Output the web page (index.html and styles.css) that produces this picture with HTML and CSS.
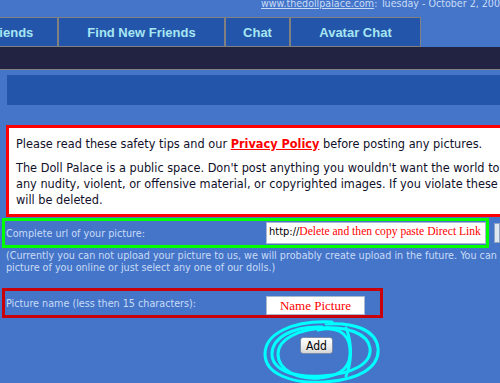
FILE: index.html
```html
<!DOCTYPE html>
<html lang="en">
<head>
  <meta charset="UTF-8" />
  <title>The Doll Palace - Add Picture</title>
  <link rel="stylesheet" href="styles.css">
</head>
<body>

<div class="topline">
  <a href="#">www.thedollpalace.com</a>: Tuesday - October 2, 2007
</div>

<div class="tabs">
  <a class="tab tab-first" href="#">My Friends</a>
  <a class="tab tab-find" href="#">Find New Friends</a>
  <a class="tab tab-chat" href="#">Chat</a>
  <a class="tab tab-avatar" href="#">Avatar Chat</a>
</div>
<div class="darkbar"></div>

<div class="titlebar"></div>

<div class="notice">
  <p>Please read these safety tips and our <a href="#">Privacy Policy</a> before posting any pictures.</p>
  <p>The Doll Palace is a public space. Don't post anything you wouldn't want the world to see. Please don't post<br>
  any nudity, violent, or offensive material, or copyrighted images. If you violate these rules, your pictures<br>
  will be deleted.</p>
</div>

<div class="form">
  <div class="url-line">
    <div class="row row-url">
      <label class="row-label">Complete url of your picture:</label>
      <div class="field field-url"><span class="proto">http://</span><span class="hint">Delete and then copy paste Direct Link</span></div>
    </div>
    <div class="side-btn"></div>
  </div>

  <p class="help">(Currently you can not upload your picture to us, we will probably create upload in the future. You can link to a<br>
  picture of you online or just select any one of our dolls.)</p>

  <div class="row row-name">
    <label class="row-label">Picture name (less then 15 characters):</label>
    <div class="field field-name">Name Picture</div>
  </div>

  <div class="submit">
    <button class="add-btn">Add</button>
    <!-- marker scribble round the button -->
    <svg class="scribble" width="124" height="70" viewBox="0 0 124 70">
      <g fill="none" stroke="#00ffff" stroke-width="3" stroke-linecap="round">
        <path d="M70 4 C30 2 3 16 3 36 C3 56 30 66 62 64 C96 62 118 50 116 30 C114 12 92 4 64 6"/>
        <path d="M60 9 C30 8 10 20 10 36 C10 52 32 60 60 58 C90 56 110 46 108 30 C106 16 86 8 58 10"/>
        <path d="M66 10 C36 10 16 22 16 36 C16 52 36 62 58 60 C80 58 90 48 88 30 C86 14 74 8 56 12"/>
        <path d="M84 10 C90 24 90 44 84 58"/>
      </g>
    </svg>
  </div>
</div>

</body>
</html>
```

FILE: styles.css
```css
* { box-sizing: border-box; }

html {
  overflow: hidden;
}

body {
  margin: 0;
  min-height: 383px;
  background: #4575c9;
  font-family: "DejaVu Sans Condensed", "DejaVu Sans", sans-serif;
  font-stretch: condensed;
  color: #c8dcf6;
}

.topline {
  height: 17px;
  padding-left: 261px;
  font-size: 10.6px;
  line-height: 6px;
  white-space: nowrap;
}

.topline a {
  color: #c8dcf6;
}

.tabs {
  display: flex;
  height: 30px;
  margin-left: -60px;
}

.tab {
  display: flex;
  align-items: center;
  justify-content: center;
  background: #2355aa;
  border: 1px solid #808080;
  color: #a6e6f2;
  font-family: "Liberation Sans", Arial, sans-serif;
  font-weight: bold;
  font-size: 13px;
  text-decoration: none;
  white-space: nowrap;
}

.tab-first { width: 118px; }
.tab-find { width: 167px; }
.tab-chat { width: 65px; }
.tab-avatar { width: 131px; }

.darkbar {
  height: 23px;
  background: #222243;
  border-bottom: 1px solid #808080;
}

.titlebar {
  height: 30px;
  margin: 5px 0 0 7px;
  background: #2355aa;
}

.notice {
  width: 620px;
  margin: 20px 0 0 6px;
  padding: 8px 10px 6px 7px;
  background: #fff;
  border: 3px solid #ff0000;
  color: #10102a;
  font-size: 12.6px;
  line-height: 16px;
  white-space: nowrap;
}

.notice p {
  margin: 0 0 8px;
}

.notice p:last-child {
  margin-bottom: 0;
}

.notice a {
  color: #ff0000;
  font-weight: bold;
}

.form {
  position: relative;
  font-size: 10.7px;
}

.url-line {
  display: flex;
  align-items: center;
  gap: 5px;
  margin: 1px 0 0 2px;
}

.row {
  display: flex;
  align-items: center;
  height: 30px;
  padding-left: 1px;
}

.row-label {
  width: 260px;
  white-space: nowrap;
}

.row-url {
  width: 487px;
  border: 3px solid #00ff00;
}

.field {
  background: #fff;
  border: 1px solid #a9b8cc;
  white-space: nowrap;
  overflow: hidden;
}

.field-url {
  width: 220px;
  height: 22px;
  padding: 2px 0 0 2px;
  font-size: 11px;
}

.proto {
  color: #000;
}

.hint,
.field-name {
  color: #ff0000;
  font-family: "Liberation Serif", "Times New Roman", serif;
  font-stretch: normal;
}

.hint {
  font-size: 11.6px;
}

.side-btn {
  width: 20px;
  height: 20px;
  background: #dfe7f1;
  border: 1px solid #8fa5c2;
}

.help {
  margin: 2px 0 0 6px;
  line-height: 12px;
  white-space: nowrap;
}

.row-name {
  width: 381px;
  margin: 14px 0 0 2px;
  border: 3px solid #c8000a;
}

.field-name {
  width: 99px;
  height: 19px;
  margin-top: 5px;
  font-size: 13px;
  line-height: 17px;
  text-align: center;
}

.submit {
  position: relative;
  padding: 19px 0 0 300px;
}

.add-btn {
  width: 33px;
  height: 17px;
  padding: 0;
  font-family: inherit;
  font-size: 12px;
  color: #000;
  background: linear-gradient(#ffffff, #ececec 60%, #d6d6d6);
  border: 1px solid #7a8ca8;
  border-radius: 3px;
}

.scribble {
  position: absolute;
  left: 262px;
  top: 0;
}
```
